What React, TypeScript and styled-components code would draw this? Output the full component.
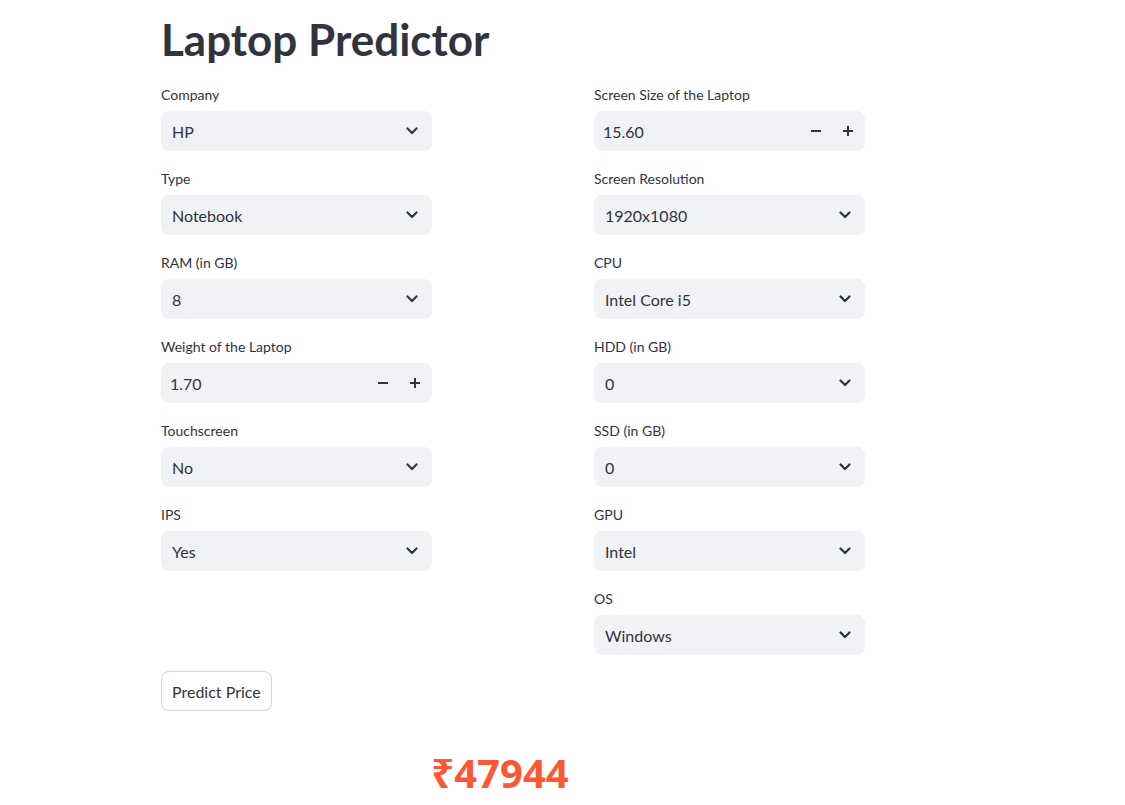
import React from "react";
import styled, { createGlobalStyle } from "styled-components";

const Global = createGlobalStyle`
  html, body { margin: 0; padding: 0; background: #ffffff; }
  body { font-family: "Lato", "Noto Sans", sans-serif; color: rgb(49, 51, 63); }
  * { box-sizing: border-box; }
`;

const Main = styled.div`
  width: 704px;
  margin-left: 161px;
  padding-top: 13px;
`;

const Title = styled.h1`
  margin: 0 0 19px 0;
  font-size: 44px;
  line-height: 52px;
  font-weight: 700;
  color: rgb(49, 51, 63);
`;

const Columns = styled.div`
  display: grid;
  grid-template-columns: 271px 271px;
  justify-content: space-between;
`;

const Column = styled.div`
  display: flex;
  flex-direction: column;
  gap: 17px;
`;

const Field = styled.div`
  display: flex;
  flex-direction: column;
`;

const Label = styled.label`
  font-size: 14px;
  line-height: 22px;
  margin-bottom: 5px;
  color: rgb(49, 51, 63);
`;

const SelectBox = styled.div`
  height: 40px;
  border-radius: 8px;
  background: rgb(240, 242, 246);
  display: flex;
  align-items: center;
  justify-content: space-between;
  padding: 0 14px 0 11px;
  font-size: 16px;
  color: rgb(49, 51, 63);
`;

const NumberBox = styled.div`
  height: 40px;
  border-radius: 8px;
  background: rgb(240, 242, 246);
  border: 1px solid rgb(240, 242, 246);
  display: flex;
  align-items: center;
  font-size: 16px;
  color: rgb(49, 51, 63);
`;

const NumberValue = styled.div`
  flex: 1;
  padding-left: 8px;
`;

const StepButton = styled.div`
  width: 32px;
  height: 100%;
  display: flex;
  align-items: center;
  justify-content: center;
`;

const Button = styled.button`
  margin-top: 16px;
  height: 40px;
  padding: 0 10px;
  border: 1px solid rgba(49, 51, 63, 0.2);
  border-radius: 8px;
  background: #ffffff;
  font-family: inherit;
  font-size: 16px;
  color: rgb(49, 51, 63);
`;

const Price = styled.h1`
  margin: 36px 0 0 0;
  padding-right: 26px;
  text-align: center;
  font-family: "Noto Sans", sans-serif;
  font-size: 40px;
  line-height: 52px;
  font-weight: 700;
  color: #ff5733;
`;

const Chevron = () => (
  <svg width="12" height="8" viewBox="0 0 12 8">
    <path d="M1.5 1.5 L6 6 L10.5 1.5" fill="none" stroke="rgb(49,51,63)" strokeWidth="2.2" strokeLinecap="round" strokeLinejoin="round" />
  </svg>
);

const Minus = () => (
  <svg width="10" height="10" viewBox="0 0 10 10">
    <rect x="0" y="4" width="10" height="2" fill="rgb(49,51,63)" />
  </svg>
);

const Plus = () => (
  <svg width="10" height="10" viewBox="0 0 10 10">
    <rect x="0" y="4" width="10" height="2" fill="rgb(49,51,63)" />
    <rect x="4" y="0" width="2" height="10" fill="rgb(49,51,63)" />
  </svg>
);

type Item = { label: string; value: string; kind: "select" | "number" };

const left: Item[] = [
  { label: "Company", value: "HP", kind: "select" },
  { label: "Type", value: "Notebook", kind: "select" },
  { label: "RAM (in GB)", value: "8", kind: "select" },
  { label: "Weight of the Laptop", value: "1.70", kind: "number" },
  { label: "Touchscreen", value: "No", kind: "select" },
  { label: "IPS", value: "Yes", kind: "select" },
];

const right: Item[] = [
  { label: "Screen Size of the Laptop", value: "15.60", kind: "number" },
  { label: "Screen Resolution", value: "1920x1080", kind: "select" },
  { label: "CPU", value: "Intel Core i5", kind: "select" },
  { label: "HDD (in GB)", value: "0", kind: "select" },
  { label: "SSD (in GB)", value: "0", kind: "select" },
  { label: "GPU", value: "Intel", kind: "select" },
  { label: "OS", value: "Windows", kind: "select" },
];

const FieldView = ({ item }: { item: Item }) => (
  <Field>
    <Label>{item.label}</Label>
    {item.kind === "select" ? (
      <SelectBox>
        <span>{item.value}</span>
        <Chevron />
      </SelectBox>
    ) : (
      <NumberBox>
        <NumberValue>{item.value}</NumberValue>
        <StepButton><Minus /></StepButton>
        <StepButton><Plus /></StepButton>
      </NumberBox>
    )}
  </Field>
);

export default function App() {
  return (
    <>
      <Global />
      <Main>
        <Title>Laptop Predictor</Title>
        <Columns>
          <Column>{left.map((i) => <FieldView key={i.label} item={i} />)}</Column>
          <Column>{right.map((i) => <FieldView key={i.label} item={i} />)}</Column>
        </Columns>
        <Button>Predict Price</Button>
        <Price>₹47944</Price>
      </Main>
    </>
  );
}
